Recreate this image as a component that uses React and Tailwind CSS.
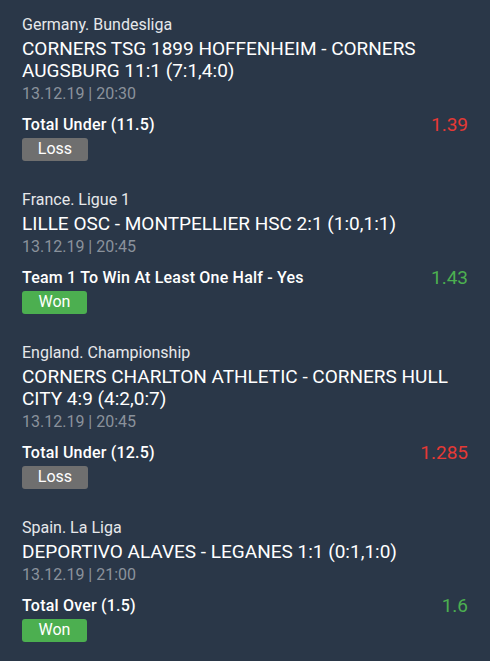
const bets = [
  {
    league: 'Germany. Bundesliga',
    match: 'CORNERS TSG 1899 HOFFENHEIM - CORNERS AUGSBURG 11:1 (7:1,4:0)',
    date: '13.12.19 | 20:30',
    bet: 'Total Under (11.5)',
    odds: '1.39',
    won: false,
  },
  {
    league: 'France. Ligue 1',
    match: 'LILLE OSC - MONTPELLIER HSC 2:1 (1:0,1:1)',
    date: '13.12.19 | 20:45',
    bet: 'Team 1 To Win At Least One Half - Yes',
    odds: '1.43',
    won: true,
  },
  {
    league: 'England. Championship',
    match: 'CORNERS CHARLTON ATHLETIC - CORNERS HULL CITY 4:9 (4:2,0:7)',
    date: '13.12.19 | 20:45',
    bet: 'Total Under (12.5)',
    odds: '1.285',
    won: false,
  },
  {
    league: 'Spain. La Liga',
    match: 'DEPORTIVO ALAVES - LEGANES 1:1 (0:1,1:0)',
    date: '13.12.19 | 21:00',
    bet: 'Total Over (1.5)',
    odds: '1.6',
    won: true,
  },
]

const BetItem = ({ b }) => {
  return (
    <div className="flex flex-col">
      <p className="text-[16px] leading-[20px] text-[#e6e8eb]">{b.league}</p>
      <h2 className="mt-[3px] text-[19px] leading-[22px] text-white">{b.match}</h2>
      <p className="mt-[2px] text-[16px] leading-[20px] text-[#8a929c]">{b.date}</p>
      <div className="mt-[11px] flex items-center justify-between h-5">
        <p className="text-[16px] leading-[20px] font-medium tracking-[0.2px] text-white">{b.bet}</p>
        <span className={b.won ? 'text-[19px] leading-[20px] text-[#4caf50]' : 'text-[19px] leading-[20px] text-[#e53935]'}>
          {b.odds}
        </span>
      </div>
      <div className="mt-[2px]">
        <span
          className={
            b.won
              ? 'inline-flex h-[23px] w-[65px] items-center justify-center rounded-[3px] bg-[#4caf50] text-[16px] text-white'
              : 'inline-flex h-[23px] w-[66px] items-center justify-center rounded-[3px] bg-[#6f6f6f] text-[16px] text-white'
          }
        >
          {b.won ? 'Won' : 'Loss'}
        </span>
      </div>
    </div>
  )
}

export default function App() {
  return (
    <div className="min-h-[661px] w-full bg-[#2a3748] px-[22px] pt-[15px] font-['Roboto',sans-serif]">
      <div className="flex flex-col gap-[29px]">
        {bets.map((b, i) => (
          <BetItem key={i} b={b} />
        ))}
      </div>
    </div>
  )
}
